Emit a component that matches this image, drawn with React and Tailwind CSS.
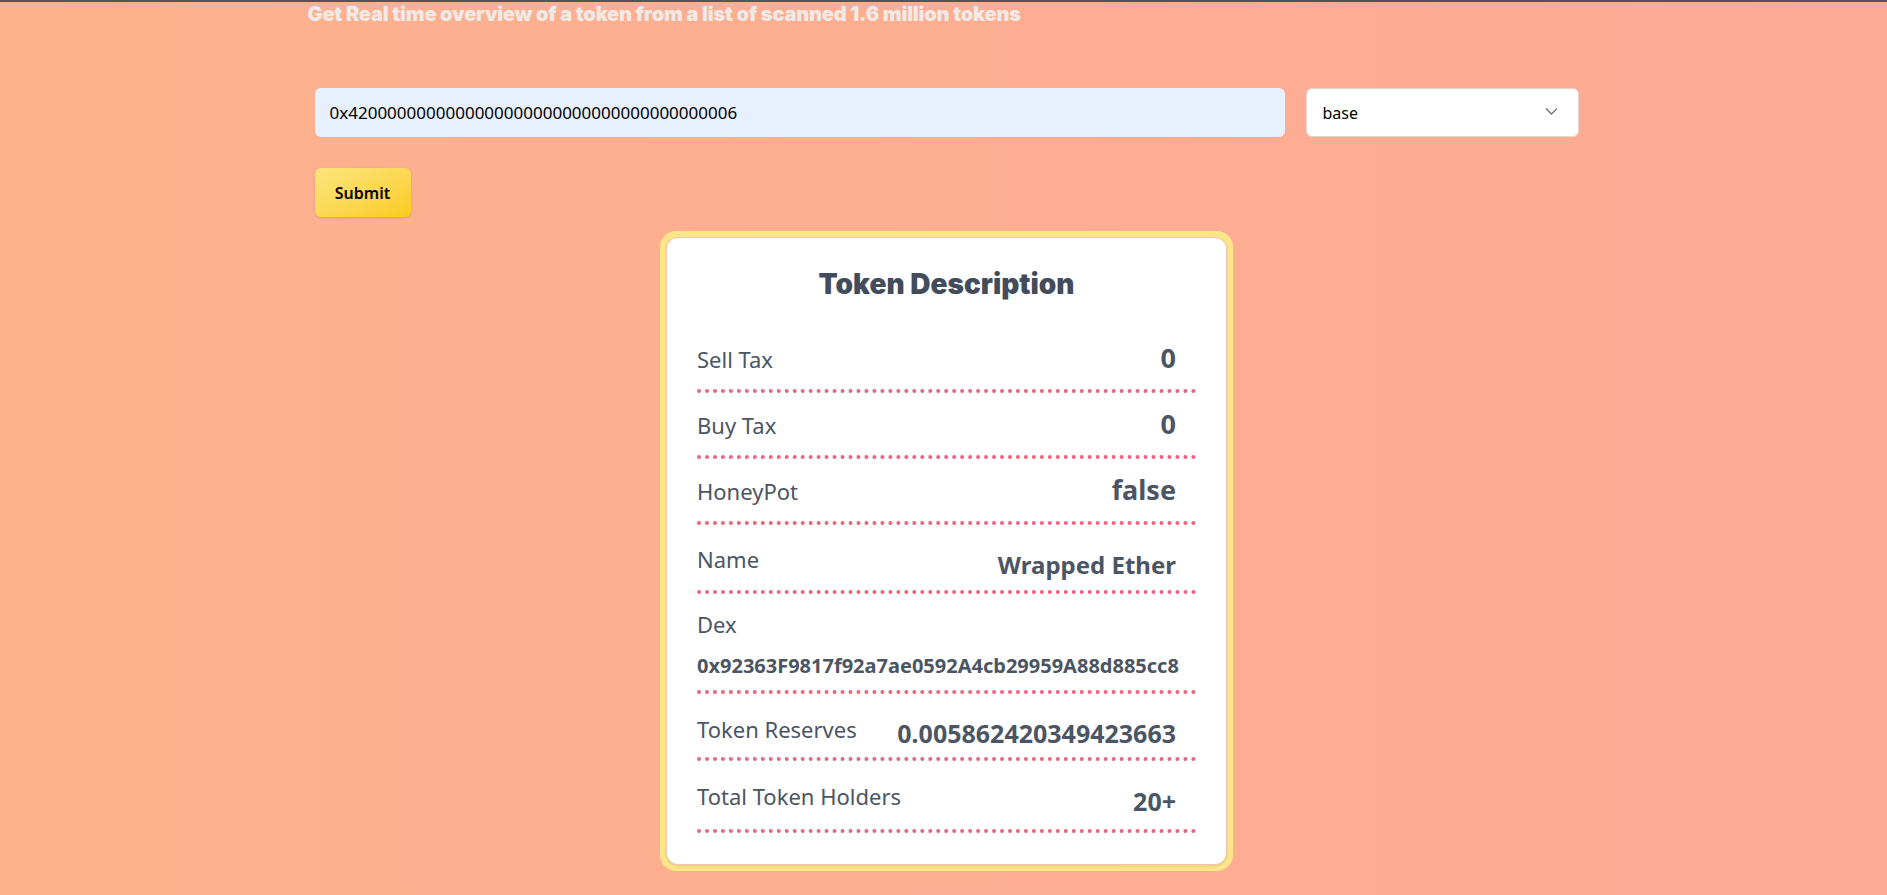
import React, { useState } from "react";

const rows = [
  { label: "Sell Tax", value: "0", valueClass: "text-[27px]", rowClass: "pt-[17px] pb-[16px]" },
  { label: "Buy Tax", value: "0", valueClass: "text-[27px]", rowClass: "pt-[17px] pb-[16px]" },
  { label: "HoneyPot", value: "false", valueClass: "text-[27px]", rowClass: "pt-[17px] pb-[16px]" },
  { label: "Name", value: "Wrapped Ether", valueClass: "text-[24px] relative top-[6px]", rowClass: "pt-[20px] pb-[17px]" },
  { label: "Token Reserves", value: "0.005862420349423663", valueClass: "text-[25px] relative top-[5px]", rowClass: "pt-[20px] pb-[14px]" },
  { label: "Total Token Holders", value: "20+", valueClass: "text-[25px] relative top-[6px]", rowClass: "pt-[20px] pb-[19px]" },
];

const Row = ({ label, value, valueClass, rowClass }) => (
  <div className={`flex items-baseline justify-between border-b-4 border-dotted border-[#f0637f] ${rowClass}`}>
    <span className="text-[22px] leading-[28px]">{label}</span>
    <span className={`font-bold leading-[28px] pr-[20px] ${valueClass}`}>{value}</span>
  </div>
);

export default function App() {
  const [address, setAddress] = useState("0x4200000000000000000000000000000000000006");
  const [chain, setChain] = useState("base");

  return (
    <div className="min-h-screen border-t-2 border-[#4b5563] bg-linear-to-r from-[#fdb28d] to-[#fea995] font-['Noto_Sans',sans-serif] pb-[20px]">
      <div className="w-[1272px] mx-auto">
        <h2 className="font-['Inter',sans-serif] font-black text-[20px] leading-[24px] text-[#f1e9e5] tracking-[-0.2px]">
          Get Real time overview of a token from a list of scanned 1.6 million tokens
        </h2>

        <form className="pl-[7px] mt-[62px]" onSubmit={(e) => e.preventDefault()}>
          <div className="flex gap-[21px]">
            <input
              value={address}
              onChange={(e) => setAddress(e.target.value)}
              className="w-[970px] h-[49px] rounded-md bg-[#e8f0fe] px-[15px] text-[17px] text-black outline-none"
            />
            <div className="relative w-[273px] h-[49px]">
              <select
                value={chain}
                onChange={(e) => setChain(e.target.value)}
                className="w-full h-full appearance-none rounded-md bg-white border border-[#e5d5cc] px-[16px] text-[16px] text-black outline-none"
              >
                <option value="base">base</option>
                <option value="ethereum">ethereum</option>
                <option value="bsc">bsc</option>
              </select>
              <svg className="absolute right-[21px] top-[19px] pointer-events-none" width="13" height="8" viewBox="0 0 13 8" fill="none">
                <path d="M1 1.5l5.5 5.5 5.5-5.5" stroke="#6b7280" strokeWidth="1.3" />
              </svg>
            </div>
          </div>

          <button
            type="submit"
            className="mt-[31px] w-[96px] h-[49px] rounded-md bg-linear-to-br from-[#fde57a] to-[#facc15] text-[16px] font-semibold text-black shadow-sm"
          >
            Submit
          </button>
        </form>
      </div>

      <div className="flex justify-center pl-[6px] mt-[14px]">
        <div className="w-[573px] rounded-2xl bg-[#fde68a] p-[6px]">
          <div className="rounded-xl bg-white border border-[#f0c9a8] px-[30px] pt-[28px] pb-[31px] text-[#4b5563] shadow-sm">
            <h1 className="text-center font-['Inter',sans-serif] font-black text-[28px] leading-[36px] text-[#434c5a] mb-[25px]">
              Token Description
            </h1>

            {rows.slice(0, 4).map((r) => (
              <Row key={r.label} {...r} />
            ))}

            <div className="border-b-4 border-dotted border-[#f0637f] pt-[16px] pb-[11px]">
              <div className="text-[22px] leading-[28px]">Dex</div>
              <div className="mt-[15px] text-[20px] font-bold leading-[26px]">
                0x92363F9817f92a7ae0592A4cb29959A88d885cc8
              </div>
            </div>

            {rows.slice(4).map((r) => (
              <Row key={r.label} {...r} />
            ))}
          </div>
        </div>
      </div>
    </div>
  );
}
